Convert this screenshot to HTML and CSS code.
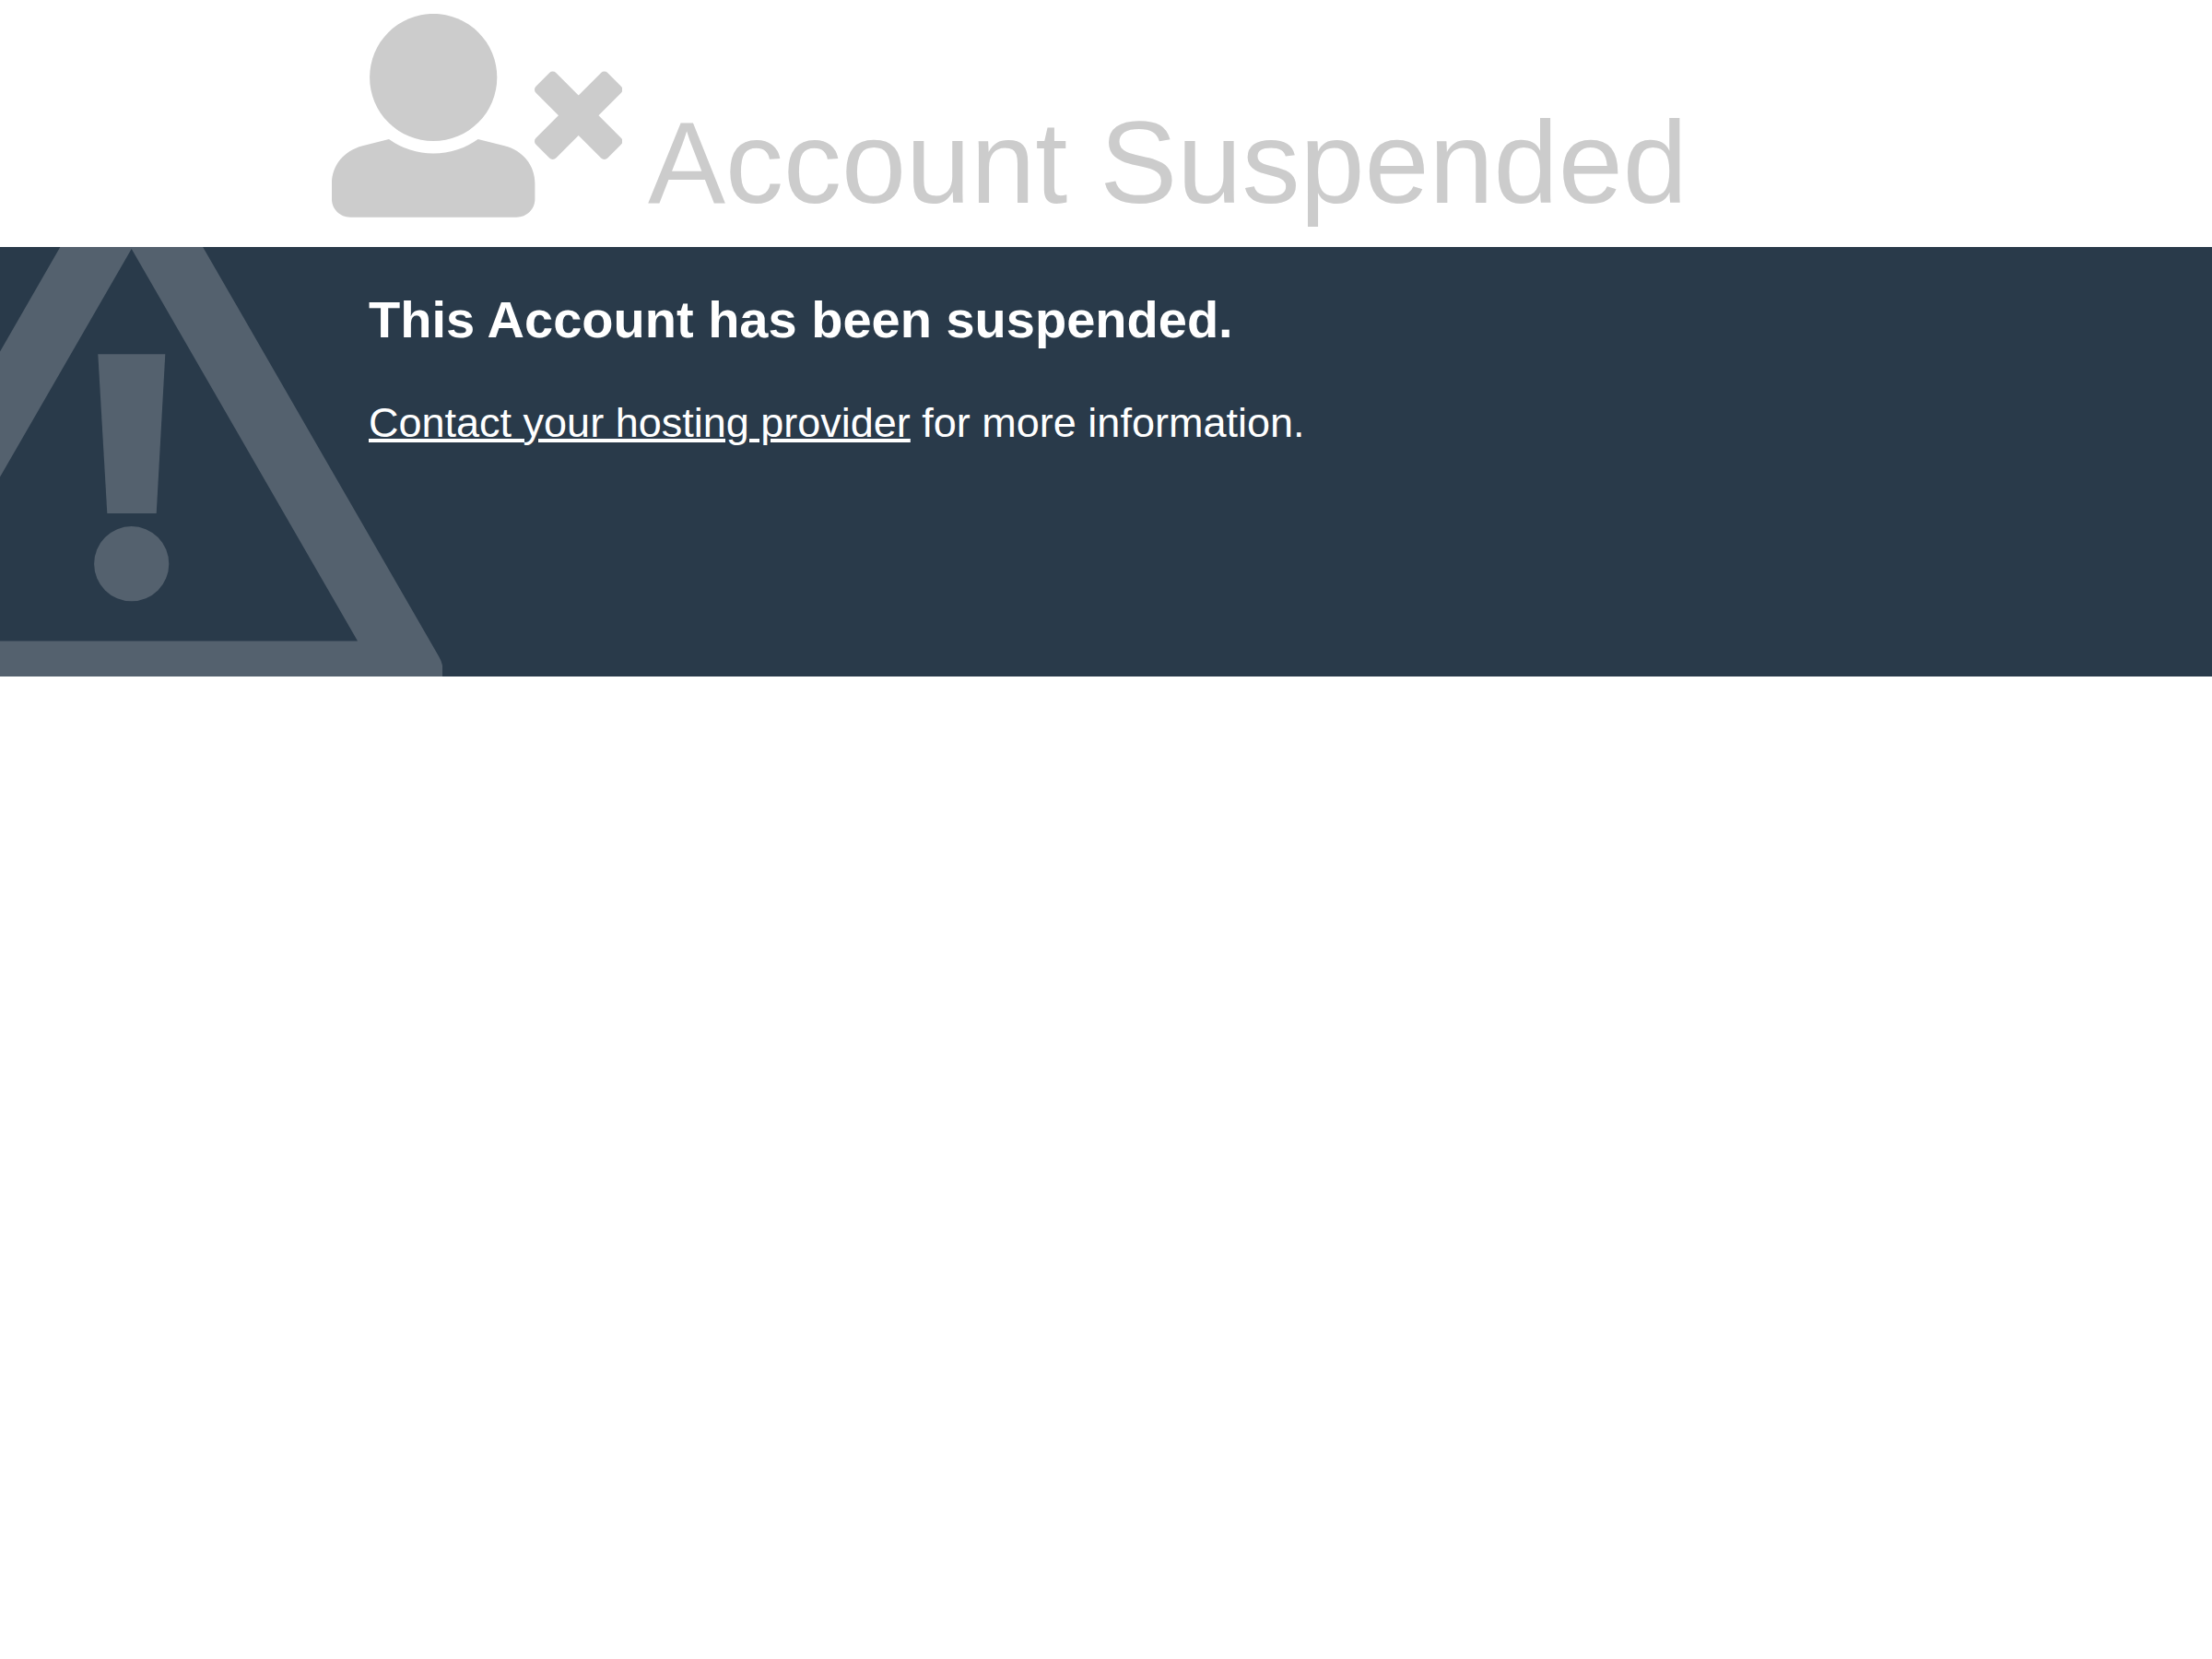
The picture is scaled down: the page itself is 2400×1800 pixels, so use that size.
FILE: index.html
```
<!DOCTYPE html>
<html lang="en">
<head>
    <meta charset="UTF-8">
    <meta name="viewport" content="width=device-width, initial-scale=1.0">
    <title>Account Suspended</title>
    <link rel="stylesheet" href="styles.css">
</head>
<body>
    <header class="status">
        <svg class="status-icon" viewBox="0 0 315 221" aria-hidden="true">
            <circle cx="110.2" cy="69" r="69.1"/>
            <path d="M62 136 L33.3 143.3 C13.5 148.5 0 164 0 184 V201 C0 212 9 220.7 20 220.7 H200.5 C211.5 220.7 220.4 212 220.4 201 V184 C220.4 164 206.5 148 187.5 143.3 L158.6 136 A82.5 82.5 0 0 1 62 136 Z"/>
            <g transform="translate(267.7 110.3) rotate(45)">
                <rect x="-55" y="-15.4" width="110" height="30.8" rx="5"/>
                <rect x="-15.4" y="-55" width="30.8" height="110" rx="5"/>
            </g>
        </svg>
        <h1 class="status-reason">Account Suspended</h1>
    </header>

    <main class="info">
        <!-- Warning sign -->
        <svg class="info-icon" viewBox="0 0 480 466" aria-hidden="true">
            <path fill-rule="evenodd" d="M65.3 0 L-120 322 V466 H480 V454 Q479 449 476 444 L220.1 0 Z M142.7 2 L388 427.5 H-102.6 Z"/>
            <path d="M106.3 116.3 H179.3 L169.7 289 H116.3 Z"/>
            <circle cx="142.7" cy="343.7" r="40.6"/>
        </svg>
        <div class="info-text">
            <h2>This Account has been suspended.</h2>
            <p><a href="#">Contact your hosting provider</a> for more information.</p>
        </div>
    </main>
</body>
</html>
```

FILE: styles.css
```
body {
    margin: 0;
    font-family: "Liberation Sans", Arial, sans-serif;
    font-size: 45px;
    line-height: 64px;
    background-color: #ffffff;
}
.status {
    display: flex;
    align-items: flex-end;
    gap: 28px;
    padding: 15px 15% 16px;
    color: #cccccc;
}
.status-icon {
    flex: none;
    width: 315px;
    margin-bottom: 16px;
    fill: currentColor;
}
.status-reason {
    margin: 0;
    font-size: 126px;
    font-weight: normal;
    line-height: 150px;
}
.info {
    position: relative;
    min-height: 466px;
    overflow: hidden;
    color: #ffffff;
    background-color: #293a4a;
}
.info-icon {
    position: absolute;
    top: 0;
    left: 0;
    width: 480px;
    fill: #54616e;
}
.info-text {
    position: relative;
    padding: 47px 400px;
}
.info-text h2 {
    margin: 0 0 48px;
    font-size: 56px;
    line-height: 64px;
}
.info-text p {
    margin: 0;
}
.info-text a {
    color: inherit;
    text-decoration-thickness: 4px;
}
```
